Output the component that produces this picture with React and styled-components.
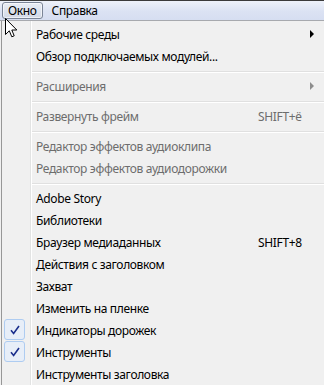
import React from "react";
import styled, { createGlobalStyle } from "styled-components";

const Global = createGlobalStyle`
  html, body { margin: 0; padding: 0; background: #f0f0f0; }
  body { font-family: "Segoe UI", "Noto Sans", "Open Sans", sans-serif; font-size: 12px; letter-spacing: -0.35px; overflow: hidden; }
`;

const Screen = styled.div`
  position: relative;
  width: 324px;
  height: 385px;
  overflow: hidden;
  background: #f0f0f0;
`;

const MenuBar = styled.div`
  display: flex;
  align-items: center;
  gap: 3px;
  padding: 0 2px;
  border-top: 1px solid #3b3b3b;
  background: linear-gradient(#eef2fa, #dbe2f3 55%, #d6def1);
  border-bottom: 1px solid #a7a9ae;
  box-sizing: border-box;
  height: 21px;
`;

const BarItem = styled.div`
  height: 17px;
  display: flex;
  align-items: center;
  padding: 0 5px;
  border-radius: 3px;
  color: #000;
  box-sizing: border-box;
  border: 1px solid ${(p) => (p.$open ? "#7b8597" : "transparent")};
  background: ${(p) => (p.$open ? "linear-gradient(#e9edf5, #d2d9e7)" : "transparent")};
  box-shadow: ${(p) => (p.$open ? "inset 0 0 0 1px rgba(255,255,255,0.6)" : "none")};
`;

const Dropdown = styled.div`
  position: relative;
  display: flex;
  flex-direction: column;
  width: 340px;
  padding-top: 2px;
  border-left: 1px solid #979797;
  margin-left: 1px;
  background: #f0f0f0;
`;

const Gutter = styled.div`
  position: absolute;
  left: 28px;
  top: 0;
  bottom: 0;
  width: 1px;
  background: #e2e3e3;
  box-shadow: 1px 0 0 #ffffff;
`;

const Row = styled.div`
  position: relative;
  display: flex;
  align-items: center;
  height: 22px;
  padding-left: 34px;
  color: ${(p) => (p.$disabled ? "#6d6d6d" : "#000")};
  white-space: nowrap;
`;

const Label = styled.span`
  flex: 0 0 222px;
`;

const Shortcut = styled.span`
  flex: 0 0 auto;
  width: 50px;
`;

const Arrow = styled.span`
  position: absolute;
  left: 308px;
  top: 7px;
  width: 0;
  height: 0;
  border-top: 4px solid transparent;
  border-bottom: 4px solid transparent;
  border-left: 4px solid ${(p) => (p.$disabled ? "#8d8d8d" : "#000")};
`;

const Separator = styled.div`
  height: 8px;
  display: flex;
  align-items: center;
  padding-left: 29px;
  &::after {
    content: "";
    flex: 1;
    height: 1px;
    background: #e0e0e0;
    box-shadow: 0 1px 0 #ffffff;
  }
`;

const CheckBox = styled.span`
  position: absolute;
  left: 2px;
  top: 0;
  width: 21px;
  height: 21px;
  box-sizing: border-box;
  border: 1px solid #aeccf1;
  border-radius: 3px;
  background: #e7eef8;
  display: flex;
  align-items: center;
  justify-content: center;
`;

const Cursor = styled.svg`
  position: absolute;
  left: 5px;
  top: 18px;
`;

const items = [
  { label: "Рабочие среды", arrow: true },
  { label: "Обзор подключаемых модулей..." },
  { sep: true },
  { label: "Расширения", arrow: true, disabled: true },
  { sep: true },
  { label: "Развернуть фрейм", shortcut: "SHIFT+ё", disabled: true },
  { sep: true },
  { label: "Редактор эффектов аудиоклипа", disabled: true },
  { label: "Редактор эффектов аудиодорожки", disabled: true },
  { sep: true },
  { label: "Adobe Story" },
  { label: "Библиотеки" },
  { label: "Браузер медиаданных", shortcut: "SHIFT+8" },
  { label: "Действия с заголовком" },
  { label: "Захват" },
  { label: "Изменить на пленке" },
  { label: "Индикаторы дорожек", checked: true },
  { label: "Инструменты", checked: true },
  { label: "Инструменты заголовка" },
];

function Check() {
  return (
    <svg width="12" height="12" viewBox="0 0 12 12">
      <path d="M2 6.2 L4.6 9.4 L10 2" fill="none" stroke="#1a2e8c" strokeWidth="1.6" strokeLinejoin="miter" />
    </svg>
  );
}

export default function App() {
  return (
    <Screen>
      <Global />
      <MenuBar>
        <BarItem $open>Окно</BarItem>
        <BarItem>Справка</BarItem>
      </MenuBar>
      <Dropdown>
        <Gutter />
        {items.map((it, i) =>
          it.sep ? (
            <Separator key={i} />
          ) : (
            <Row key={i} $disabled={it.disabled}>
              {it.checked && (
                <CheckBox>
                  <Check />
                </CheckBox>
              )}
              <Label>{it.label}</Label>
              {it.shortcut && <Shortcut>{it.shortcut}</Shortcut>}
              {it.arrow && <Arrow $disabled={it.disabled} />}
            </Row>
          )
        )}
      </Dropdown>
      <Cursor width="13" height="20" viewBox="0 0 13 20">
        <path d="M0.5 0.5 L0.5 16.5 L4.3 12.8 L6.8 18.8 L9.2 17.8 L6.8 12 L11.8 12 Z" fill="#fff" stroke="#000" strokeWidth="1" strokeLinejoin="miter" />
      </Cursor>
    </Screen>
  );
}
